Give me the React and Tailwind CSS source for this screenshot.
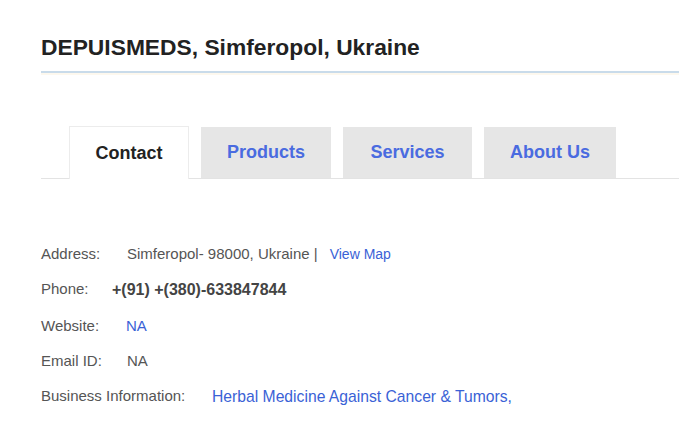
const TABS = ['Contact', 'Products', 'Services', 'About Us']

const TAB_WIDTHS = {
  Contact: 'w-[120px]',
  Products: 'w-[130px]',
  Services: 'w-[129px]',
  'About Us': 'w-[132px]',
}

// ── Tab strip ────────────────────────────────────────────────────────────────

function Tabs() {
  return (
    <div className="mt-[51px] flex items-end border-b border-[#e3e3e3] pl-[28px] h-[53px]">
      {TABS.map((t, i) => {
        const active = i === 0
        return (
          <div
            key={t}
            className={`${TAB_WIDTHS[t]} ${i > 0 ? 'ml-[12px]' : ''} ${
              active
                ? 'h-[53px] -mb-px bg-white border border-b-0 border-[#ececec] text-[#222]'
                : 'h-[51px] bg-[#e6e6e6] text-[#4a6be0]'
            } flex items-center justify-center text-[18px] font-bold`}
          >
            {t}
          </div>
        )
      })}
    </div>
  )
}

// ── Contact rows ─────────────────────────────────────────────────────────────

function Row({ label, width, children, className = '' }) {
  return (
    <div className={`flex items-center h-[35px] ${className}`}>
      <span className={`${width} shrink-0 text-[#555]`}>{label}</span>
      {children}
    </div>
  )
}

export default function App() {
  return (
    <div
      className="w-[679px] h-[426px] bg-white overflow-hidden pl-[41px] pt-[34px]"
      style={{ fontFamily: '"Liberation Sans", Arial, sans-serif' }}
    >
      <h1 className="text-[22.8px] font-bold text-[#222] leading-[27px]">
        DEPUISMEDS, Simferopol, Ukraine
      </h1>
      <div className="mt-[10px] h-[2px] bg-[#c9dbea]" />
      <div className="h-[2px] bg-[#fdf8ee]" />

      <Tabs />

      <div className="mt-[58px] text-[15px]">
        <Row label="Address:" width="w-[86px]">
          <span className="text-[#555]">Simferopol- 98000, Ukraine |</span>
          <span className="ml-[12px] text-[14px] text-[#3a62d6]">View Map</span>
        </Row>
        <Row label="Phone:" width="w-[71px]">
          <span className="font-bold text-[16px] text-[#444]">+(91) +(380)-633847844</span>
        </Row>
        <Row label="Website:" width="w-[85px]" className="mt-[2px]">
          <span className="text-[#3a62d6]">NA</span>
        </Row>
        <Row label="Email ID:" width="w-[86px]">
          <span className="text-[#555]">NA</span>
        </Row>
        <Row label="Business Information:" width="w-[171px]">
          <span className="text-[15.7px] text-[#3a62d6]">Herbal Medicine Against Cancer &amp; Tumors,</span>
        </Row>
      </div>
    </div>
  )
}
